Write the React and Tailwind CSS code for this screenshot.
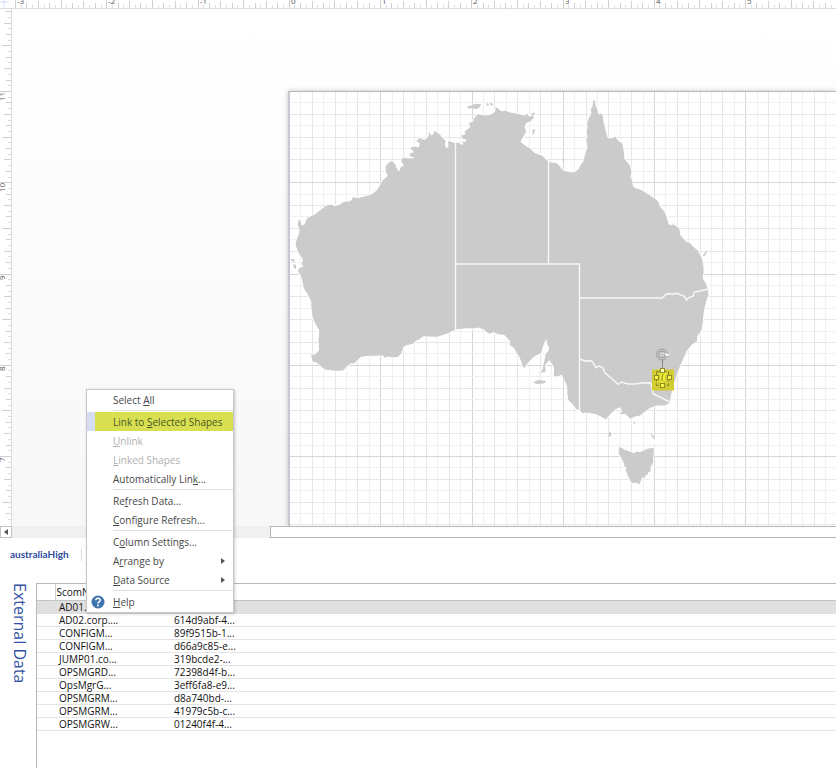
import React from "react";

const INCH = 91.25;

const MAINLAND =
  "M455.5 142.3L453 142L450 140.7L448 141L447.7 143L448 146L446.7 148L445.5 145L446 142L445.7 140L443 138L440 134L437 132L434 130L433 134L431.7 135L430.5 134L430 132L428 132.7L428.5 135L426.7 138L425 139L423 139L421 138L420 137.5L417.7 138.7L416 142L419 143L419 146L417.7 146.7L414 146L411.7 146.7L409 149L412 150L413 152L411.7 152.7L409 153L409 155L411 157L414 157.7L408 158L405 157L403 157.7L400.7 159L401 162L403 164L402.7 166L400 167L399 171L397 168L396 165L392 160L388 163L385 166.7L385.5 172L387.3 175.7L385 178L381.7 180.7L379 186L376.7 190L373 193L369 195L364 196L358 197.7L355 197L352.7 196.7L350.7 200.7L347 201L343 201.7L340 204L335 205.7L331 204L326.7 205L321 209L315 214L310 216L306.7 218.3L305 222L304 224.7L301.7 224.7L301 221L300.7 218L298 221L297.3 224.7L299 230L298 235L296 240L295 245L298 253L301 257L302.7 260.7L301 263L302.7 266.7L300 267L297.3 270.7L300 275L301.7 280L303.3 288.3L307 294L310.7 301L311 308L312 316.7L315 324L318.7 330L318 340L318.7 350L315 354.3L311 354L310.7 355L312 361.7L316.7 363.3L321 367L325 370L335 371.3L342.7 371L346 368L350 364L353 364L355 363.3L360.7 357.3L368 356.5L380 356L383 356L384 358.3L388 357L393 358L398.3 357.3L401.7 353.3L404 347L406 346L413.3 344L416 341L419 340L423.3 336.7L430 337L436.7 337.3L446.7 334.3L455.7 330L466.7 328.7L473 329L478.3 328L484 330L487 333L489.3 334.3L493.3 332.7L499 335L503 335L505 336L510 341.7L509 344L510 346L513.3 347.7L515 351L518.3 356L521 361.7L522 366L524.3 369L528.3 362.7L534 357L541.7 353.3L543.3 346.7L546 340L547 345L548.7 347.3L548 351L545.3 353.3L543.3 363.3L541.7 370.7L537.3 373.3L545 372.7L546 370L545.7 365L549.3 360.7L551 363L553.3 366.7L553.3 376.7L557 377L561.7 375.3L563 379L564 380L566.7 386.7L567 394L567.7 400L572 404L576.7 410L579 410L583 414L585 413L595 414.3L601 417L606 420L609 416L613.3 411.7L617 409L620 407.7L621.7 411.7L619.3 413L620 415L625 414.3L628 417L630.7 419.3L635 417L640 416L650 408.3L657 406L665 406L670 403.3L671 398.3L672 393L672.7 388L676.7 376.7L679 370L681.7 363.3L687.3 350.7L692 345L697.3 341.7L698 336L702 330L703.3 321.7L704 314L705 308L707 300L709 295L708 288L706 283L703 278L704 273L704 267L703 261L701.7 256.7L698 250L694 247L690 242.7L686 241L680.7 235L680 229L678 226.7L675 225L673 222L672 225L669 224L667 217L665 211.7L660 206L659 202L656 199L653 197L647.3 193.3L644 191L640 189L636 188L633 185.7L633 181L630.7 177L632 174L631.7 170L630 165L625 159L624 150L622.7 143L619 141L615 135.7L612 138L608 137.7L606 130L604 121.7L603 115L601.7 113L599 114L598 110.7L596 105L595.7 100L592.7 100L592 107L590 110L591 113L588 119L586.7 123L587 128L586 131L587 137L585.7 140L587 147L585 153L583 161L580 165L578.3 169L575 171.5L571.7 172L567 171L563 170L560 166L556.7 162.7L549 161.7L545 158L541.7 155L535 152.7L530 148L525 145L521 141.7L523 138L526.7 131.7L525 127L526.7 123L531 122L533 119L535 118L533 116L536 114L534 112L531.7 112.7L531 116L529 116L528 113L525 115L520 114L515 112.7L510 112L505 110L502 111L498 108L495 106L495 111L493 113L491 114L485 115L480 114L476.7 114L475 117L473 118L473 121L471.7 121.7L468.3 122.7L470 127L466 130L464 131.7L465 134L460.7 135L462 139L466 140L465 141.5L461 141L463 144L461.7 144.3L458 142Z";
const TASMANIA =
  "M618.3 446.7L621 447L624 449L631.7 451.7L634 453L636 451L640 451.7L648 448L654.3 447.3L654 455L653.3 463.3L651 467L651 471.7L648 473L649 476L646 475L645 480L643 477.3L639.3 485L636 483L631.7 483.7L628 477L625 470L626 467L623 467L624 464L622.7 461.7L618.3 453.3Z";
const ISLANDS =
  "M467 106L470 106L475 104L481 104L480 107L476.7 109.3L472 108L469 109Z M486 104l2 -1l1 2l-1 1z M490 103l2 0l1 2l-2 1z M532 130L535 129L534 134L532 135L533 132Z M562 159l1 -1l1 3h-1z M533 382.3L538.3 380L545 380.7L546 382L543 383.5L537 384Z M609 431L611 433L611 436L609 437Z M650 432.5L654.5 437L654.5 440L652 437Z M703 255L706 251L707 252L704 257Z M634 421l1 1v2h-1z M290 259l4 0l1 3l-3 -1z M293 264l3 1v4l-2 -1z";
const BORDERS =
  "M455.5 142V330M455.5 264H579.5V410M548.5 161V264M579.5 298H662L667 293.7L672 294L676.7 293.3L684 296L686.7 300L689 297.3L692.7 296.7L694.3 292L700 291L707.7 289.3M579.5 359L585 361L591.7 360.7L596 367.7L599 366L602.7 367.7L605 372.7L611 378L618.3 384.3L621.7 382L628 384L635 384L642 383L650.7 382.7L653.3 394L670.7 402.3";

const range = (n) => Array.from({ length: n }, (_, i) => i);

function tickLength(i) {
  if (i % 16 === 0) return 11;
  if (i % 8 === 0) return 9;
  if (i % 4 === 0) return 7;
  return i % 2 === 0 ? 5 : 3;
}

function TopRuler() {
  return (
    <div className="h-[9px] overflow-hidden border-b border-[#dcdcdc] bg-white">
      <svg width="2400" height="8" className="block" aria-label="Horizontal ruler">
        <path d="M0 2H9M4 0V8" stroke="#d6defa" />
        {range(416).map((i) => {
          const x = Math.round(15 + (i * INCH) / 16) + 0.5;
          return <path key={i} d={`M${x} 8V${8 - tickLength(i)}`} stroke={i % 2 ? "#dedede" : "#d0d0d0"} />;
        })}
        {range(25).map((i) => (
          <text key={i} x={Math.round(17 + i * INCH)} y="4" fontSize="8" fontFamily="Open Sans, sans-serif" fill="#555">
            {i - 3}
          </text>
        ))}
      </svg>
    </div>
  );
}

function SideRuler() {
  return (
    <div className="w-3 shrink-0 overflow-hidden border-r border-[#dcdcdc] bg-white">
      <svg width="11" height="517" className="block" aria-label="Vertical ruler">
        {range(92).map((i) => {
          const y = Math.round(82 + ((i - 16) * INCH) / 16) + 0.5;
          return <path key={i} d={`M11 ${y}H${11 - tickLength(i)}`} stroke={i % 2 ? "#dedede" : "#d0d0d0"} />;
        })}
        {[11, 10, 9, 8, 7].map((n, i) => {
          const y = Math.round((n > 9 ? 92 : 88) + i * INCH);
          return (
            <text key={n} transform={`translate(5 ${y})rotate(-90)`} fontSize="8" fontFamily="Open Sans, sans-serif" fill="#555">
              {n}
            </text>
          );
        })}
      </svg>
    </div>
  );
}

function gridColor(i) {
  if (i % 8 === 0) return "#d6d6d6";
  return i % 2 === 0 ? "#e6e6e6" : "#f0f0f0";
}

function MapPage() {
  return (
    <div className="ml-[276px] mt-[82px] h-[435px] overflow-hidden border-l-2 border-t border-l-[#c6cad0] border-t-[#b2b7b9] bg-white shadow-[0_0_5px_rgba(0,0,0,0.22)]">
      <svg width="2000" height="434" viewBox="290 92 2000 434" className="block" aria-label="Map of Australia">
        {range(175).map((i) => {
          const x = Math.round(289 + ((i + 1) * INCH) / 8) + 0.5;
          return <path key={i} d={`M${x} 92V526`} stroke={gridColor(i + 1)} />;
        })}
        {range(38).map((i) => {
          const y = Math.round(91 + ((i + 1) * INCH) / 8) + 0.5;
          return <path key={i} d={`M290 ${y}H2290`} stroke={gridColor(i + 1)} />;
        })}
        <path d="M291 259l6 2M296 263l4 5M593 92l1 8M617 470l5 6M647 477l6 2M654 438v6M533 113l6 -4" stroke="#fff" strokeWidth="3" />
        <g fill="#cbcbcb" stroke="#fff" strokeLinejoin="round">
          <path d={MAINLAND} strokeWidth="1" />
          <path d={TASMANIA} />
          <path d={ISLANDS} stroke="none" />
        </g>
        <path d={BORDERS} fill="none" stroke="#f8f8f8" strokeWidth="1.4" />
        <g fill="none" stroke="#8c8c8c">
          <circle cx="662" cy="354.5" r="5.5" stroke="#999" />
          <circle cx="662" cy="354.5" r="3.5" stroke="#999" />
          <path d="M662.5 360V369" />
        </g>
        <path d="M664.5 353l5 1.500l-3 2z" fill="#fff" />
        <rect x="652" y="369.500" width="22" height="21" fill="#d1cc32" />
        <path d="M656.500 371.500h12v14h-12z" fill="none" stroke="#87851e" strokeDasharray="4 2" />
        <path d="M664 372l-3 3v6l3 3M666 373l-2 3v5" fill="none" stroke="#f2ef35" strokeWidth="2" />
        <path d="M663 374l-1 3v4" fill="none" stroke="#8d8a22" />
        <g fill="#f8f64a" stroke="#8f8d26">
          <rect x="660.500" y="368.500" width="4" height="4" fill="#ffffb5" />
          <rect x="654.500" y="375.500" width="4" height="4" />
          <rect x="667.500" y="375.500" width="4" height="4" />
          <rect x="660.500" y="383.500" width="4" height="4" />
        </g>
      </svg>
    </div>
  );
}

function ScrollBar() {
  return (
    <div className="flex h-3 bg-[#f0f0f0]">
      <button aria-label="Scroll left" className="flex w-3 items-center justify-center border border-[#c4c4c4] bg-white">
        <svg width="4" height="6" viewBox="0 0 4 6">
          <path d="M4 0V6L0 3Z" fill="#555" />
        </svg>
      </button>
      <div className="ml-[258px] flex-1 border border-r-0 border-[#b4b4b4] bg-white" />
    </div>
  );
}

const ROWS = [
  ["AD01.c...", ""],
  ["AD02.corp....", "614d9abf-4..."],
  ["CONFIGM...", "89f9515b-1..."],
  ["CONFIGM...", "d66a9c85-e..."],
  ["JUMP01.co...", "319bcde2-..."],
  ["OPSMGRD...", "72398d4f-b..."],
  ["OpsMgrG...", "3eff6fa8-e9..."],
  ["OPSMGRM...", "d8a740bd-..."],
  ["OPSMGRM...", "41979c5b-c..."],
  ["OPSMGRW...", "01240f4f-4..."],
];

function ExternalData() {
  return (
    <section className="flex flex-1 pt-3">
      <h2 className="w-9 shrink-0 pl-1 text-[16px] leading-8 text-[#3452a4] [writing-mode:vertical-rl]">External Data</h2>
      <div className="flex-1 border-l border-t border-[#b8b8b8]">
        <table className="w-full table-fixed border-collapse text-[10px] leading-3 text-[#111]">
          <colgroup>
            <col className="w-[18px]" />
            <col className="w-[115px]" />
            <col />
          </colgroup>
          <thead>
            <tr className="h-4 border-b border-[#c4c4c4] text-left">
              <td className="border-r border-[#d0d0d0]" />
              <th className="p-0 pl-px font-normal">ScomName</th>
              <th className="p-0" />
            </tr>
          </thead>
          <tbody>
            {ROWS.map(([name, id], i) => (
              <tr key={i} className={i === 0 ? "h-[13px] border-b border-[#e0e0e0] bg-[#e0e0e0]" : "h-[13px] border-b border-[#e4e4e4]"}>
                <td className="p-0" />
                <td className="p-0 pl-1">{name}</td>
                <td className="p-0 pl-1">{id}</td>
              </tr>
            ))}
          </tbody>
        </table>
      </div>
    </section>
  );
}

const MENU = [
  ["Select ", "A", "ll"],
  "-",
  ["Link to ", "S", "elected Shapes", "selected"],
  ["", "U", "nlink", "disabled"],
  ["", "L", "inked Shapes", "disabled"],
  ["Automatically Lin", "k", "..."],
  "-",
  ["Re", "f", "resh Data..."],
  ["", "C", "onfigure Refresh..."],
  "-",
  ["C", "o", "lumn Settings..."],
  ["A", "r", "range by", "submenu"],
  ["", "D", "ata Source", "submenu"],
  "-",
  ["", "H", "elp", "help"],
];

function MenuItem({ item: [before, key, after, kind] }) {
  const selected = kind === "selected";
  return (
    <button
      role="menuitem"
      disabled={kind === "disabled"}
      className={`flex h-[19px] w-full items-center text-left ${selected ? "bg-[#d5def5] text-[#4d5524]" : kind === "disabled" ? "text-[#b0b0b0]" : "text-[#484848]"}`}
    >
      <span className={`flex h-full items-center justify-center ${selected ? "w-2" : "w-[26px]"}`}>
        {kind === "help" && (
          <svg width="14" height="14" viewBox="0 0 14 14" className="mr-1 shrink-0">
            <circle cx="7" cy="7" r="6.500" fill="#3f73ad" />
            <path d="M4.800 5.200C4.900 2.700 9.400 2.700 9.300 5.300C9.300 6.900 7 6.800 7 8.500" fill="none" stroke="#fff" strokeWidth="1.500" />
            <circle cx="7" cy="10.500" r="1" fill="#fff" />
          </svg>
        )}
      </span>
      <span className={`flex h-full flex-1 items-center whitespace-pre ${selected ? "bg-[#d8e052] pl-[18px]" : ""}`}>
        <span>{before}<u>{key}</u>{after}</span>
      </span>
      {kind === "submenu" && (
        <svg width="4" height="6" viewBox="0 0 4 6" className="mr-2">
          <path d="M0 0V6L4 3Z" fill="#555" />
        </svg>
      )}
    </button>
  );
}

function ContextMenu() {
  return (
    <div role="menu" className="absolute left-[86px] top-[389px] w-[148px] border border-[#c6c6c6] bg-white pb-px text-[10px] leading-4 shadow-[1px_1px_3px_rgba(0,0,0,0.2)]">
      {MENU.map((item, i) =>
        item === "-" ? <div key={i} role="separator" className="my-px ml-[26px] h-px bg-[#e0e0e0]" /> : <MenuItem key={i} item={item} />
      )}
    </div>
  );
}

export default function App() {
  return (
    <main className="relative flex min-h-screen flex-col overflow-hidden bg-white font-['Open_Sans','Noto_Sans',sans-serif]">
      <TopRuler />
      <div className="flex">
        <SideRuler />
        <div className="min-w-0 flex-1 overflow-hidden bg-linear-to-b from-white to-[#f7f7f7]">
          <MapPage />
        </div>
      </div>
      <ScrollBar />
      <nav className="flex h-[33px] items-center px-[10px] font-['Lato','Open_Sans',sans-serif] text-[10px] font-bold text-[#2d4ba0]">
        <a href="#page" className="w-[71px]">australiaHigh</a>
        <span className="h-3 w-px bg-[#d8d8d8]" />
      </nav>
      <ExternalData />
      <ContextMenu />
    </main>
  );
}
